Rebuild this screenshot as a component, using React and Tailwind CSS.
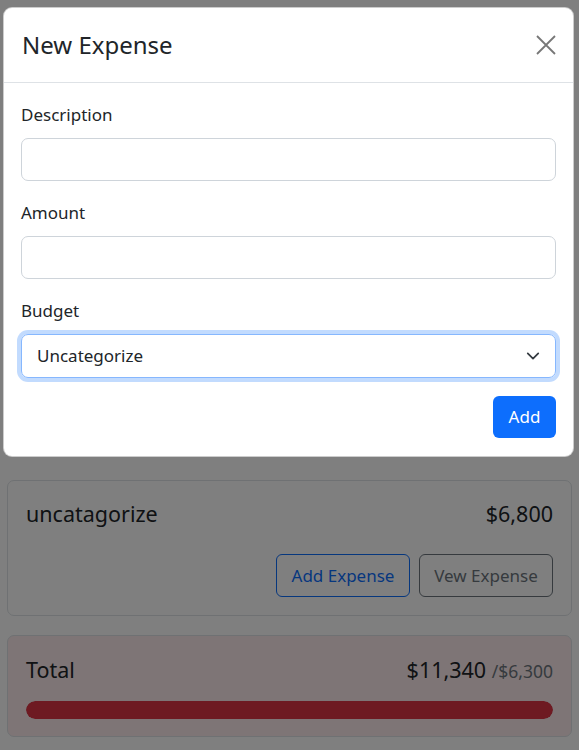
import React from 'react';

function Field({ label, children }) {
  return (
    <div className="mb-[18px]">
      <label className="block h-[28px] leading-[28px] mb-[9px] text-[17px] text-[#212529]">{label}</label>
      {children}
    </div>
  );
}

export default function App() {
  return (
    <div className="relative min-h-[750px] bg-white text-[#212529]" style={{ fontFamily: '"Noto Sans", "Open Sans", sans-serif' }}>
      {/* Page behind the modal */}
      <div className="px-[7px] pt-[480px] flex flex-col gap-[19px]">
        <div className="border border-[#dee2e6] rounded-[7px] bg-white p-[18px]">
          <div className="flex items-center justify-between h-[30px] mb-[25px]">
            <span className="text-[21.5px]">uncatagorize</span>
            <span className="text-[21.5px]">$6,800</span>
          </div>
          <div className="flex justify-end gap-[9px]">
            <button className="h-[43px] w-[134px] rounded-[6px] border border-[#0d6efd] text-[#0d6efd] text-[17px]">Add Expense</button>
            <button className="h-[43px] w-[134px] rounded-[6px] border border-[#6c757d] text-[#6c757d] text-[17px]">Vew Expense</button>
          </div>
        </div>
        <div className="border border-[#dee2e6] rounded-[7px] bg-[#fcebec] px-[18px] pt-[18px] pb-[17px]">
          <div className="flex items-center justify-between h-[32px] mb-[15px]">
            <span className="text-[21.5px]">Total</span>
            <span className="text-[21.5px]">
              $11,340 <span className="text-[17.5px] text-[#6c757d]">/$6,300</span>
            </span>
          </div>
          <div className="h-[18px] rounded-full bg-[#e9ecef] overflow-hidden">
            <div className="h-full w-full rounded-full bg-[#dc3545]" />
          </div>
        </div>
      </div>

      {/* Backdrop */}
      <div className="absolute inset-0 bg-black/50" />

      {/* Modal */}
      <div className="absolute left-[3px] right-[5px] top-[7px] bg-white rounded-[9px] border border-black/20">
        <div className="flex items-center justify-between h-[75px] pl-[18px] pr-[17px] border-b border-[#dee2e6]">
          <h5 className="text-[24px] font-normal">New Expense</h5>
          <button className="w-[20px] h-[20px] flex items-center justify-center text-[#777777]">
            <svg width="20" height="20" viewBox="0 0 20 20" fill="none" stroke="currentColor" strokeWidth="1.8">
              <path d="M1 1l18 18M19 1L1 19" />
            </svg>
          </button>
        </div>
        <div className="px-[17px] pt-[18px] pb-[18px]">
          <Field label="Description">
            <input className="block w-full h-[43px] rounded-[7px] border border-[#ced4da] px-[14px] text-[17px] outline-none" />
          </Field>
          <Field label="Amount">
            <input className="block w-full h-[43px] rounded-[7px] border border-[#ced4da] px-[14px] text-[17px] outline-none" />
          </Field>
          <Field label="Budget">
            <div className="relative h-[44px] rounded-[7px] border border-[#86b7fe] shadow-[0_0_0_4px_rgba(13,110,253,0.25)] flex items-center px-[15px]">
              <span className="text-[17px]">Uncategorize</span>
              <svg className="absolute right-[15px] top-1/2 -translate-y-1/2" width="14" height="14" viewBox="0 0 16 16" fill="none" stroke="#343a40" strokeWidth="2" strokeLinecap="round" strokeLinejoin="round">
                <path d="M2 5l6 6 6-6" />
              </svg>
            </div>
          </Field>
          <div className="flex justify-end">
            <button className="h-[42px] w-[63px] rounded-[6px] bg-[#0d6efd] text-white text-[17px]">Add</button>
          </div>
        </div>
      </div>
    </div>
  );
}
